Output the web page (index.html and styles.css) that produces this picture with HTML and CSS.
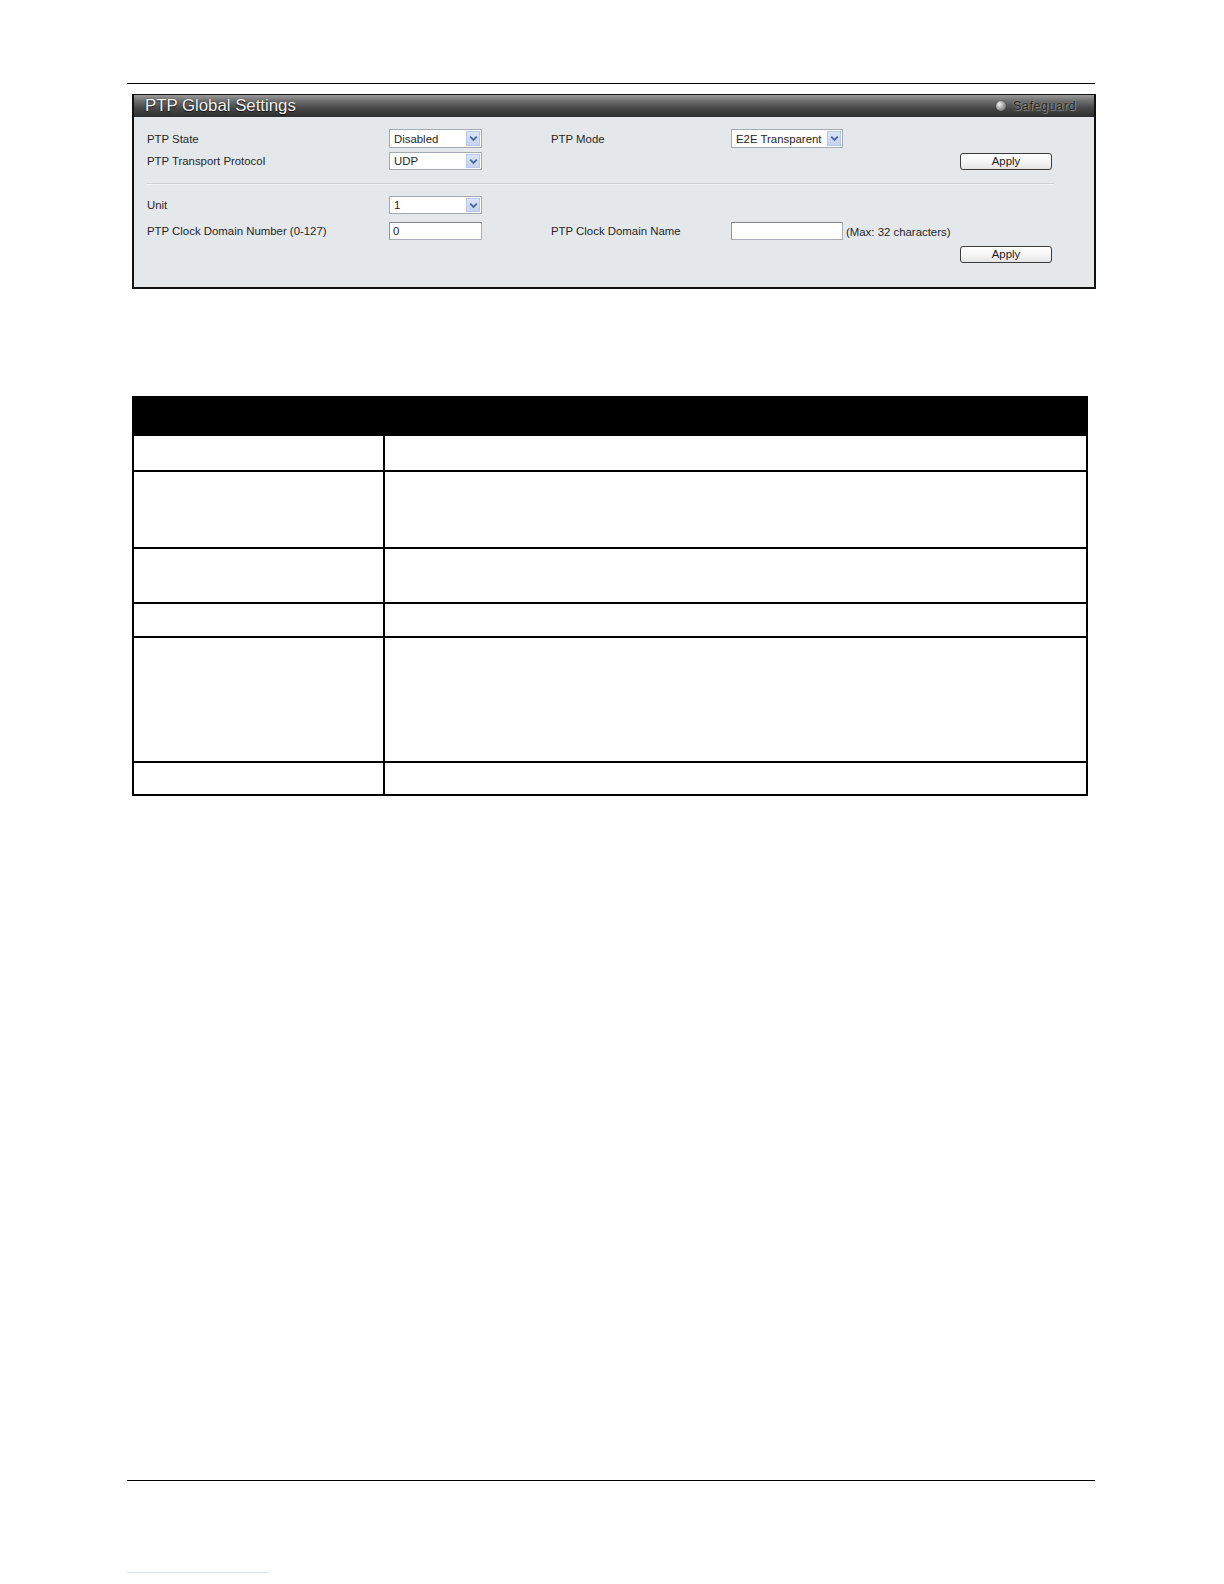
FILE: index.html
```html
<!DOCTYPE html>
<html>
<head>
<meta charset="utf-8">
<title>PTP Global Settings</title>
<link rel="stylesheet" href="styles.css">
</head>
<body>
<div class="page">
  <div class="rule top-rule"></div>

  <div class="panel">
    <div class="panel-head">
      <span class="panel-title">PTP Global Settings</span>
      <span class="safeguard"><span class="sg-dot"></span><span class="sg-text">Safeguard</span></span>
    </div>
    <div class="panel-body">
      <div class="row r1">
        <div class="c1">PTP State</div>
        <div class="c2">
          <div class="sel w93"><span class="sel-text">Disabled</span><span class="sel-btn"><svg width="9" height="7" viewBox="0 0 9 7"><path d="M1.2 1.6 L4.5 4.9 L7.8 1.6" fill="none" stroke="#4a679b" stroke-width="1.8"/></svg></span></div>
        </div>
        <div class="c3">PTP Mode</div>
        <div class="c4">
          <div class="sel w112"><span class="sel-text">E2E Transparent</span><span class="sel-btn"><svg width="9" height="7" viewBox="0 0 9 7"><path d="M1.2 1.6 L4.5 4.9 L7.8 1.6" fill="none" stroke="#4a679b" stroke-width="1.8"/></svg></span></div>
        </div>
        <div class="c5"></div>
      </div>
      <div class="row r2">
        <div class="c1">PTP Transport Protocol</div>
        <div class="c2">
          <div class="sel w93"><span class="sel-text">UDP</span><span class="sel-btn"><svg width="9" height="7" viewBox="0 0 9 7"><path d="M1.2 1.6 L4.5 4.9 L7.8 1.6" fill="none" stroke="#4a679b" stroke-width="1.8"/></svg></span></div>
        </div>
        <div class="c3"></div>
        <div class="c4"></div>
        <div class="c5"><div class="btn">Apply</div></div>
      </div>
      <div class="sep"></div>
      <div class="row r3">
        <div class="c1">Unit</div>
        <div class="c2">
          <div class="sel w93"><span class="sel-text">1</span><span class="sel-btn"><svg width="9" height="7" viewBox="0 0 9 7"><path d="M1.2 1.6 L4.5 4.9 L7.8 1.6" fill="none" stroke="#4a679b" stroke-width="1.8"/></svg></span></div>
        </div>
        <div class="c3"></div>
        <div class="c4"></div>
        <div class="c5"></div>
      </div>
      <div class="row r4">
        <div class="c1">PTP Clock Domain Number (0-127)</div>
        <div class="c2"><div class="inp w93">0</div></div>
        <div class="c3">PTP Clock Domain Name</div>
        <div class="c4"><div class="inp w112"></div><span class="hint">(Max: 32 characters)</span></div>
        <div class="c5"></div>
      </div>
      <div class="row r5">
        <div class="c1"></div>
        <div class="c2"></div>
        <div class="c3"></div>
        <div class="c4"></div>
        <div class="c5"><div class="btn">Apply</div></div>
      </div>
    </div>
  </div>

  <div class="tbl">
    <div class="thead"></div>
    <div class="trow h1 first"><div class="tc"></div><div class="tc"></div></div>
    <div class="trow h2"><div class="tc"></div><div class="tc"></div></div>
    <div class="trow h3"><div class="tc"></div><div class="tc"></div></div>
    <div class="trow h4"><div class="tc"></div><div class="tc"></div></div>
    <div class="trow h5"><div class="tc"></div><div class="tc"></div></div>
    <div class="trow h6"><div class="tc"></div><div class="tc"></div></div>
  </div>

  <div class="rule bottom-rule"></div>
  <div class="link-line"></div>
</div>
</body>
</html>
```

FILE: styles.css
```css
html, body {
  margin: 0;
  padding: 0;
  background: #ffffff;
}

.page {
  width: 1224px;
  height: 1584px;
  overflow: hidden;
  padding-top: 83px;
  box-sizing: border-box;
  font-family: "Liberation Sans", Arial, sans-serif;
  color: #262626;
}

.rule {
  height: 1px;
  background: #000;
  margin-left: 127px;
  width: 968px;
}

/* ---------- panel ---------- */
.panel {
  margin-top: 10px;
  margin-left: 132px;
  width: 964px;
  box-sizing: border-box;
  border: 2px solid #111;
  border-top-width: 1px;
  background: #e5e8eb;
}

.panel-head {
  height: 22px;
  display: flex;
  align-items: center;
  justify-content: space-between;
  padding: 0 18px 0 11px;
  background: linear-gradient(to bottom, #9a9a9a 0%, #6a6a6a 30%, #474747 60%, #2e2e2e 100%);
}

.panel-title {
  font-size: 16.8px;
  color: #f4f4f4;
  text-shadow: 0 0 1px #222, 0 1px 1px #111;
  line-height: 22px;
  margin-top: -1px;
}

.safeguard {
  display: flex;
  align-items: center;
  gap: 7px;
}

.sg-dot {
  width: 10px;
  height: 10px;
  border-radius: 50%;
  background: radial-gradient(circle at 35% 35%, #f2f2f2 0%, #a8a8a8 45%, #555 100%);
  box-shadow: 0 0 1px #222;
}

.sg-text {
  font-size: 12.5px;
  color: #262626;
  text-shadow: 0 0 2px #a0a0a0, 1px 1px 0 #7a7a7a;
  letter-spacing: 0.6px;
}

.panel-body {
  padding: 12px 0 24px 13px;
  font-size: 11.4px;
}

.row {
  display: flex;
  align-items: center;
}

.r1 { height: 19px; }
.r2 { height: 18px; margin-top: 4px; }
.r3 { height: 18px; margin-top: 11px; }
.r4 { height: 18px; margin-top: 8px; }
.r5 { height: 17px; margin-top: 6px; }

.c1 { width: 242px; }
.c2 { width: 162px; }
.c3 { width: 180px; }
.c4 { width: 229px; display: flex; align-items: center; }
.c5 { flex: 1; }

.r1 .c1, .r1 .c3 { padding-top: 1px; }

.sep {
  margin-top: 13px;
  width: 907px;
  height: 1px;
  background: #ccd0d4;
  border-bottom: 1px solid #f2f4f6;
}

.sel {
  height: 19px;
  box-sizing: border-box;
  border: 1px solid #a3abb4;
  background: #fff;
  display: flex;
  align-items: center;
  justify-content: space-between;
  padding: 1px 1px 1px 4px;
}

.r2 .sel, .r3 .sel { height: 18px; }

.w93 { width: 93px; }
.w112 { width: 112px; }

.sel-text {
  font-size: 11.4px;
  line-height: 14px;
}

.sel-btn {
  width: 14px;
  align-self: stretch;
  background: linear-gradient(to bottom, #dbe5f8 0%, #c3d2ef 100%);
  border: 1px solid #b9c8e6;
  box-sizing: border-box;
  display: flex;
  align-items: center;
  justify-content: center;
}

.inp {
  height: 18px;
  box-sizing: border-box;
  border: 1px solid #a7b0ba;
  border-top-color: #7d8791;
  border-left-color: #8e98a2;
  background: #fff;
  font-size: 11.4px;
  line-height: 16px;
  padding-left: 3px;
}

.hint {
  margin-left: 3px;
  font-size: 11.4px;
  padding-top: 1px;
}

.btn {
  width: 92px;
  height: 17px;
  box-sizing: border-box;
  border: 1px solid #3c3c3c;
  border-radius: 3px;
  background: linear-gradient(to bottom, #ffffff 0%, #f6f6f6 50%, #e4e4e4 100%);
  font-size: 11.4px;
  line-height: 15px;
  text-align: center;
  color: #222;
}

/* ---------- table ---------- */
.tbl {
  margin-top: 107px;
  margin-left: 132px;
  width: 956px;
  box-sizing: border-box;
  border: 2px solid #000;
}

.thead {
  height: 38px;
  background: #000;
}

.trow {
  display: grid;
  grid-template-columns: 251px 1fr;
  border-top: 2px solid #000;
}

.trow.first { border-top: none; }

.trow .tc:first-child {
  border-right: 2px solid #000;
}

.h1 { height: 34px; }
.h2 { height: 75px; }
.h3 { height: 53px; }
.h4 { height: 32px; }
.h5 { height: 123px; }
.h6 { height: 31px; }

.bottom-rule {
  margin-top: 684px;
}

.link-line {
  margin-top: 91px;
  margin-left: 127px;
  width: 142px;
  height: 1px;
  background: #dfe6f2;
}
```
